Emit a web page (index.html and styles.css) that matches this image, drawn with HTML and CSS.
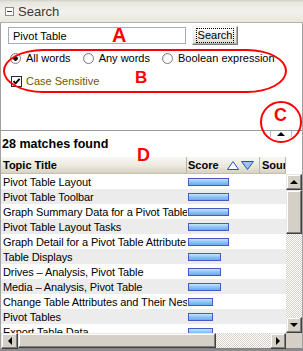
FILE: index.html
```html
<!DOCTYPE html>
<html lang="en">
<head>
    <meta charset="UTF-8">
    <meta name="viewport" content="width=device-width, initial-scale=1.0">
    <title>Search</title>
    <link rel="stylesheet" href="styles.css">
</head>
<body>

    <div class="pane-head">
        <span class="toggle"></span>
        <span class="pane-title">Search</span>
    </div>

    <div class="search-box">
        <div class="query-row">
            <input class="query" type="text" value="Pivot Table">
            <button class="search-btn" type="button"><span>Search</span></button>
        </div>
        <div class="mode-row">
            <span class="opt"><span class="radio on"></span>All words</span>
            <span class="opt"><span class="radio"></span>Any words</span>
            <span class="opt"><span class="radio"></span>Boolean expression</span>
        </div>
        <div class="case-row">
            <span class="check">
                <svg width="9" height="9" viewBox="0 0 9 9"><path d="M1.5 4.2 L3.6 6.4 L7.6 1.8" fill="none" stroke="#000" stroke-width="1.8"/></svg>
            </span>
            Case Sensitive
        </div>
    </div>

    <div class="splitter"><span class="grip"></span></div>

    <div class="results">
        <div class="count">28 matches found</div>
        <div class="grid-wrap">
            <div class="grid">
                <div class="head-row">
                    <div class="c-title">Topic Title</div>
                    <div class="c-score">Score
                        <svg class="sort" width="27" height="9" viewBox="0 0 27 9">
                            <polygon points="0.5,8.5 6,0.5 11.5,8.5" fill="#fff" stroke="#2c4ccc"/>
                            <polygon points="14.5,0.5 26.5,0.5 20.5,8.5" fill="#9ec2f4" stroke="#2c4ccc"/>
                        </svg>
                    </div>
                    <div class="c-src">Source</div>
                </div>
                <div class="rows">
                    <div class="row"><div class="c-title">Pivot Table Layout</div><div class="c-score"><span class="bar" style="width:41px"></span></div></div>
                    <div class="row"><div class="c-title">Pivot Table Toolbar</div><div class="c-score"><span class="bar" style="width:41px"></span></div></div>
                    <div class="row"><div class="c-title">Graph Summary Data for a Pivot Table</div><div class="c-score"><span class="bar" style="width:41px"></span></div></div>
                    <div class="row"><div class="c-title">Pivot Table Layout Tasks</div><div class="c-score"><span class="bar" style="width:41px"></span></div></div>
                    <div class="row"><div class="c-title">Graph Detail for a Pivot Table Attribute</div><div class="c-score"><span class="bar" style="width:41px"></span></div></div>
                    <div class="row"><div class="c-title">Table Displays</div><div class="c-score"><span class="bar" style="width:33px"></span></div></div>
                    <div class="row"><div class="c-title">Drives – Analysis, Pivot Table</div><div class="c-score"><span class="bar" style="width:33px"></span></div></div>
                    <div class="row"><div class="c-title">Media – Analysis, Pivot Table</div><div class="c-score"><span class="bar" style="width:33px"></span></div></div>
                    <div class="row"><div class="c-title">Change Table Attributes and Their Nesting</div><div class="c-score"><span class="bar" style="width:25px"></span></div></div>
                    <div class="row"><div class="c-title">Pivot Tables</div><div class="c-score"><span class="bar" style="width:25px"></span></div></div>
                    <div class="row"><div class="c-title">Export Table Data</div><div class="c-score"><span class="bar" style="width:25px"></span></div></div>
                </div>
            </div>
            <div class="vcol">
                <div class="vcol-top"></div>
                <div class="sb-btn"><span class="arr-up"></span></div>
                <div class="sb-thumb v"></div>
                <div class="sb-track"></div>
                <div class="sb-btn"><span class="arr-down"></span></div>
            </div>
        </div>
        <div class="hbar">
            <div class="sb-btn wide"><span class="arr-left"></span></div>
            <div class="sb-thumb h"></div>
            <div class="sb-track"></div>
            <div class="sb-btn"><span class="arr-right"></span></div>
            <div class="sb-corner"></div>
        </div>
    </div>

    <!-- callouts drawn over the screenshot -->
    <span class="mark mark-a">A</span>
    <span class="ring ring-b"></span>
    <span class="mark mark-b">B</span>
    <span class="ring ring-c"></span>
    <span class="mark mark-c">C</span>
    <span class="mark mark-d">D</span>

</body>
</html>
```

FILE: styles.css
```css
* {
    box-sizing: border-box;
}
body {
    margin: 0;
    width: 303px;
    height: 351px;
    overflow: hidden;
    position: relative;
    font-family: "Liberation Sans", Arial, sans-serif;
    font-size: 11px;
    color: #000;
    background: #8c8c8c;
}

/* pane title */
.pane-head {
    height: 23px;
    display: flex;
    align-items: center;
    gap: 4px;
    padding-left: 5px;
    background: linear-gradient(#cfcfc6 0, #e6e5de 2px, #f2f1eb 50%, #e8e7df);
    border-bottom: 1px solid #b4b4ac;
}
.toggle {
    width: 9px;
    height: 9px;
    border: 1px solid #8a8a8a;
    background: #fff;
    display: flex;
    align-items: center;
    justify-content: center;
}
.toggle::before {
    content: "";
    width: 5px;
    height: 1px;
    background: #404040;
}
.pane-title {
    font-size: 13px;
    color: #383838;
}

/* search form */
.search-box {
    height: 107px;
    padding: 3px 0 0 7px;
    background: #fff;
    border-left: 1px solid #a0a0a0;
    border-right: 1px solid #a0a0a0;
}
.query-row {
    display: flex;
    align-items: center;
    gap: 6px;
}
.query {
    width: 178px;
    height: 17px;
    margin: 0;
    padding: 0 0 0 4px;
    border: 1px solid #a5acb2;
    font-family: inherit;
    font-size: 11px;
    color: #000;
    outline: none;
}
.search-btn {
    width: 46px;
    height: 19px;
    margin: 0;
    padding: 0;
    display: flex;
    align-items: center;
    justify-content: center;
    font-family: inherit;
    font-size: 11px;
    color: #000;
    background: linear-gradient(#fdfdfc, #ecebe6 60%, #dcdbd4);
    border: 1px solid;
    border-color: #f4f4f2 #7a7a7a #7a7a7a #f4f4f2;
    box-shadow: inset -1px -1px #b4b4ae;
}
.search-btn span {
    outline: 1px dotted #000;
    padding: 0 1px;
    line-height: 13px;
}
.mode-row {
    margin-top: 6px;
    height: 14px;
    padding-left: 2px;
    display: flex;
    align-items: center;
    gap: 12px;
}
.opt {
    display: flex;
    align-items: center;
    gap: 5px;
}
.radio {
    width: 11px;
    height: 11px;
    border-radius: 50%;
    border: 1px solid #7c7c7c;
    background: radial-gradient(circle at 60% 60%, #fff 40%, #dcdcd6);
}
.radio.on {
    background: radial-gradient(circle, #1a1a1a 0 2px, transparent 2.6px),
                radial-gradient(circle at 60% 60%, #fff 40%, #dcdcd6);
}
.case-row {
    margin-top: 9px;
    height: 14px;
    padding-left: 3px;
    display: flex;
    align-items: center;
    gap: 4px;
    color: #6b5a00;
}
.check {
    width: 11px;
    height: 11px;
    border: 1px solid #2a2a2a;
    background: #fff;
    display: flex;
    align-items: center;
    justify-content: center;
}

/* splitter between form and results */
.splitter {
    height: 7px;
    display: flex;
    justify-content: flex-end;
    padding-right: 10px;
    background: #fff;
    border-top: 1px solid #9a9a9a;
    border-left: 1px solid #a0a0a0;
    border-right: 1px solid #a0a0a0;
}
.grip {
    width: 22px;
    height: 6px;
    display: flex;
    align-items: center;
    justify-content: center;
    border-left: 1px solid #b4bccc;
    border-right: 1px solid #b4bccc;
}
.grip::before {
    content: "";
    border-left: 4px solid transparent;
    border-right: 4px solid transparent;
    border-bottom: 4px solid #000;
}

/* results */
.results {
    background: #fff;
    border-left: 1px solid #a0a0a0;
    border-right: 1px solid #a0a0a0;
}
.count {
    height: 20px;
    line-height: 15px;
    padding-left: 1px;
    font-size: 12.5px;
    font-weight: bold;
}
.grid-wrap {
    height: 176px;
    display: flex;
}
.grid {
    width: 285px;
    overflow: hidden;
}
.head-row {
    height: 17px;
    display: flex;
    align-items: stretch;
    font-weight: bold;
    background: linear-gradient(#f8f7f1, #ebe9de 55%, #d6d2c2);
    border-bottom: 1px solid #c4c0b0;
}
.head-row > div {
    display: flex;
    align-items: center;
    border-right: 1px solid #b8b4a4;
    overflow: hidden;
    white-space: nowrap;
}
.c-title {
    width: 186px;
    flex: none;
    padding-left: 2px;
    overflow: hidden;
    white-space: nowrap;
}
.row .c-title {
    letter-spacing: -0.1px;
}
.c-score {
    width: 73px;
    flex: none;
    padding-left: 1px;
    display: flex;
    align-items: center;
}
.c-src {
    flex: 1;
    padding-left: 2px;
}
.sort {
    margin-left: 8px;
}
.row {
    height: 15px;
    display: flex;
    align-items: center;
}
.row:nth-child(even) {
    background: #ececec;
}
.bar {
    height: 8px;
    border: 1px solid #4858c4;
    background: linear-gradient(#c8e4ff, #8cc4f6 50%, #6aaaf0);
}

/* classic scrollbars */
.vcol {
    width: 16px;
    display: flex;
    flex-direction: column;
}
.vcol-top {
    height: 17px;
    flex: none;
    background: #fff;
}
.sb-btn {
    width: 16px;
    height: 16px;
    flex: none;
    display: flex;
    align-items: center;
    justify-content: center;
    background: #d4d0c8;
    border: 1px solid;
    border-color: #e8e6e0 #404040 #404040 #e8e6e0;
    box-shadow: inset -1px -1px #808080, inset 1px 1px #fff;
}
.sb-btn.wide {
    width: 17px;
}
.sb-thumb {
    flex: none;
    background: #d4d0c8;
    border: 1px solid;
    border-color: #e8e6e0 #404040 #404040 #e8e6e0;
    box-shadow: inset -1px -1px #808080, inset 1px 1px #fff;
}
.sb-thumb.v {
    height: 44px;
}
.sb-thumb.h {
    width: 198px;
}
.sb-track {
    flex: 1;
    background: repeating-conic-gradient(#d4d0c8 0% 25%, #fff 0% 50%) 0 0 / 2px 2px;
}
.sb-corner {
    width: 16px;
    background: #d4d0c8;
}
.hbar {
    height: 16px;
    display: flex;
    border-bottom: 1px solid #808080;
}
.arr-up, .arr-down {
    border-left: 4px solid transparent;
    border-right: 4px solid transparent;
}
.arr-up {
    border-bottom: 4px solid #000;
}
.arr-down {
    border-top: 4px solid #000;
}
.arr-left, .arr-right {
    border-top: 4px solid transparent;
    border-bottom: 4px solid transparent;
}
.arr-left {
    border-right: 4px solid #000;
}
.arr-right {
    border-left: 4px solid #000;
}

/* red callouts */
.mark {
    position: absolute;
    line-height: 1;
    font-weight: bold;
    color: #f00;
}
.mark-a { left: 112px; top: 25px; font-size: 20px; }
.mark-b { left: 135px; top: 69px; font-size: 17px; }
.mark-c { left: 274px; top: 106px; font-size: 18px; }
.mark-d { left: 137px; top: 146px; font-size: 18px; }
.ring {
    position: absolute;
    border: 2px solid #f00;
}
.ring-b {
    left: 3px;
    top: 49px;
    width: 284px;
    height: 44px;
    border-radius: 40px / 22px;
}
.ring-c {
    left: 260px;
    top: 101px;
    width: 42px;
    height: 42px;
    border-radius: 50%;
}
```
